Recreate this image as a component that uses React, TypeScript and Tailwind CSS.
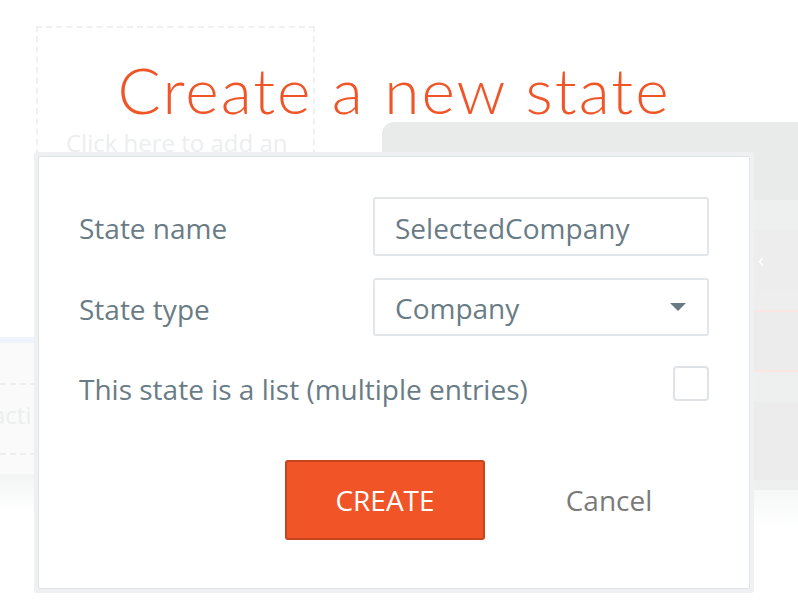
import React from 'react';

const font = { fontFamily: "'Open Sans', 'Liberation Sans', sans-serif" };

function BackgroundPage() {
  return (
    <div className="flex pt-[26px]">
      {/* Left column */}
      <div className="w-[382px] shrink-0 flex flex-col">
        <div className="ml-[36px] w-[279px] h-[150px] border-2 border-dashed border-[#eef0f1] px-[28px] pt-[103px] overflow-hidden">
          <span className="whitespace-nowrap text-[24px] text-[#eceeef] leading-none">Click here to add an</span>
        </div>
        <div className="mt-[161px] w-[36px] h-[6px] bg-[#eef4fb]" />
        <div className="w-[36px] h-[131px] bg-[#fafafa] flex flex-col">
          <div className="mt-[40px] border-t-2 border-dashed border-[#eeeeee]" />
          <span className="mt-[18px] -ml-[8px] text-[24px] text-[#eceeee] leading-none">acti</span>
          <div className="mt-[26px] border-t-2 border-dashed border-[#eeeeee]" />
        </div>
        <div className="h-[40px] bg-gradient-to-b from-[#f3f4f4] to-white" />
      </div>

      {/* Right panel */}
      <div className="flex-1 mt-[96px] flex flex-col">
        <div className="h-[368px] rounded-tl-[12px] bg-[#e9ebeb] flex flex-col">
          <div className="h-[78px]" />
          <div className="h-[30px] bg-[#eef0f0]" />
          <div className="h-[60px] bg-[#ededed] flex items-center justify-end pr-[34px]">
            <span className="text-[20px] text-white leading-none">‹</span>
          </div>
          <div className="h-[20px] bg-[#eeeeee]" />
          <div className="h-[2px] bg-[#fbe6e4]" />
          <div className="h-[58px] bg-[#ececec]" />
          <div className="h-[2px] bg-[#fbe6e4]" />
          <div className="h-[30px] bg-[#eeefef]" />
          <div className="flex-1 bg-[#ececec]" />
          <div className="h-[10px] bg-[#eef0f0]" />
        </div>
        <div className="h-[40px] bg-gradient-to-b from-[#f6f7f7] to-white" />
      </div>
    </div>
  );
}

function Caret() {
  return (
    <svg width="16" height="8" viewBox="0 0 16 8">
      <path d="M0 0h16L8 8z" fill="#687b84" />
    </svg>
  );
}

function CreateStateDialog() {
  return (
    <div className="absolute inset-0 flex flex-col items-center pt-[58px] pr-[10px]" style={font}>
      <h1
        className="text-[64px] leading-none text-[#f05527] tracking-[2px]"
        style={{ fontFamily: "'Lato', 'Open Sans', sans-serif", fontWeight: 300 }}
      >
        Create a new state
      </h1>

      <div className="mt-[30px] w-[720px] bg-[#eef0f1] p-[4px] rounded-[3px]">
        <div className="bg-white border border-[#dfe4e7] rounded-[2px] px-[40px] pt-[40px] pb-[48px]">
          {/* State name */}
          <div className="flex items-center justify-between">
            <label className="mt-[3px] text-[28px] text-[#697c86] leading-none">State name</label>
            <div className="w-[336px] h-[59px] border-2 border-[#e3e6e8] rounded-[3px] flex items-center px-[20px]">
              <span className="mt-[2px] text-[28px] text-[#697c86] leading-none">SelectedCompany</span>
            </div>
          </div>

          {/* State type */}
          <div className="mt-[22px] flex items-center justify-between">
            <label className="mt-[3px] text-[28px] text-[#697c86] leading-none">State type</label>
            <div className="w-[336px] h-[58px] border-2 border-[#e3e6e8] rounded-[3px] flex items-center justify-between pl-[20px] pr-[21px]">
              <span className="mt-[2px] text-[28px] text-[#697c86] leading-none">Company</span>
              <Caret />
            </div>
          </div>

          {/* List checkbox */}
          <div className="mt-[30px] flex items-start justify-between">
            <label className="mt-[9px] text-[28px] text-[#697c86] leading-none">This state is a list (multiple entries)</label>
            <div className="w-[36px] h-[35px] border-2 border-[#e0e3e5] rounded-[4px]" />
          </div>

          {/* Actions */}
          <div className="mt-[57px] flex justify-end gap-[24px]">
            <button className="w-[200px] h-[80px] bg-[#f05427] border-2 border-[#c8441d] rounded-[3px] text-white text-[28px] leading-none">
              CREATE
            </button>
            <button className="w-[200px] h-[80px] text-[#7a7a7a] text-[28px] leading-none">Cancel</button>
          </div>
        </div>
      </div>
    </div>
  );
}

export default function App() {
  return (
    <div className="relative w-[798px] h-[612px] overflow-hidden bg-white" style={font}>
      <BackgroundPage />
      <CreateStateDialog />
    </div>
  );
}
